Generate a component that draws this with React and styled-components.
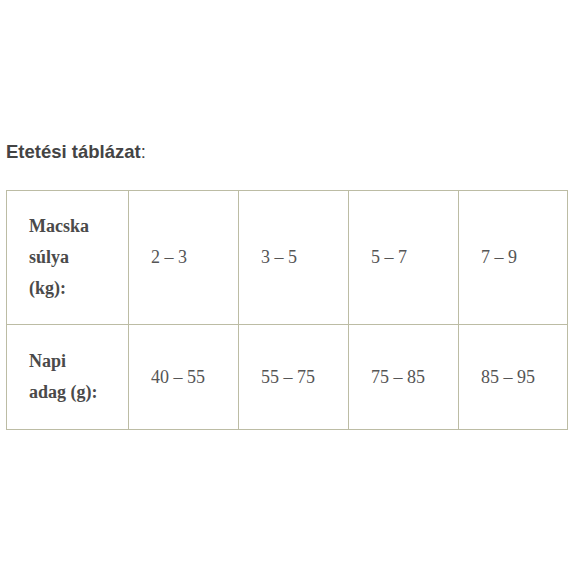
import React from "react";
import styled, { createGlobalStyle } from "styled-components";

const GlobalStyle = createGlobalStyle`
  body {
    margin: 0;
    background: #ffffff;
  }
`;

const Page = styled.div`
  padding: 141px 0 0 6px;
`;

const Heading = styled.p`
  margin: 0 0 27px 0;
  font-family: "Liberation Sans", Arial, sans-serif;
  font-size: 18.5px;
  line-height: 22px;
  color: #444444;
  font-weight: 700;
`;

const Colon = styled.span`
  font-weight: 400;
`;

const Table = styled.table`
  border-collapse: collapse;
  table-layout: fixed;
  width: 561px;
  font-family: "Liberation Serif", "Times New Roman", serif;
  font-size: 18px;
  color: #555555;
`;

const Cell = styled.td`
  border: 1px solid #bcbca4;
  padding: ${(props) => (props.$tall ? "20px 21px 20px 22px" : "21px 21px 21px 22px")};
  line-height: 31px;
  vertical-align: middle;
  font-weight: ${(props) => (props.$head ? 700 : 400)};
  color: ${(props) => (props.$head ? "#4a4a4a" : "#555555")};
`;

const widths = [122, 110, 110, 110, 109];

const rows = [
  { label: ["Macska", "súlya", "(kg):"], values: ["2 – 3", "3 – 5", "5 – 7", "7 – 9"] },
  { label: ["Napi", "adag (g):"], values: ["40 – 55", "55 – 75", "75 – 85", "85 – 95"] },
];

export default function App() {
  return (
    <>
      <GlobalStyle />
      <Page>
        <Heading>
          Etetési táblázat<Colon>:</Colon>
        </Heading>
        <Table>
          <colgroup>
            {widths.map((w, i) => (
              <col key={i} style={{ width: w }} />
            ))}
          </colgroup>
          <tbody>
            {rows.map((row, r) => (
              <tr key={r}>
                <Cell $head $tall={r === 0}>
                  {row.label.map((line, i) => (
                    <React.Fragment key={i}>
                      {i > 0 && <br />}
                      {line}
                    </React.Fragment>
                  ))}
                </Cell>
                {row.values.map((v, i) => (
                  <Cell key={i} $tall={r === 0}>
                    {v}
                  </Cell>
                ))}
              </tr>
            ))}
          </tbody>
        </Table>
      </Page>
    </>
  );
}
